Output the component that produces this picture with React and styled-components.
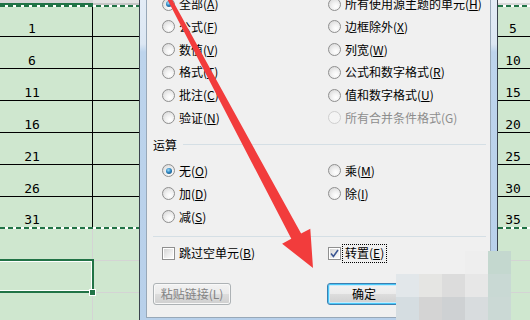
import React from 'react';
import styled, { createGlobalStyle, css } from 'styled-components';

const Global = createGlobalStyle`
  html, body { margin: 0; padding: 0; background: #fff; }
  body { width: 530px; height: 320px; overflow: hidden; }
`;

const mono = `"DejaVu Sans Mono", "Liberation Mono", monospace`;
const ui = `"Noto Sans CJK SC", "Noto Sans", sans-serif`;

const Page = styled.div`
  position: relative;
  width: 530px;
  height: 320px;
  overflow: hidden;
  display: flex;
  background: #cfe7cf;
`;

/* ---------- spreadsheet ---------- */
const Sheet = styled.div`
  flex: none;
  width: ${p => p.$width}px;
  display: flex;
  flex-direction: column;
  background: #cfe7cf;
`;

const HeaderRow = styled.div`
  display: flex;
  height: 5px;
  flex: none;
`;

const HeaderCell = styled.div`
  box-sizing: border-box;
  width: ${p => p.$w}px;
  flex: none;
  background: ${p => p.$bg};
  border-bottom: 2px solid ${p => p.$line};
`;

const DashLine = styled.div`
  height: 2px;
  flex: none;
  background: repeating-linear-gradient(90deg, #217346 0 5px, #ffffff 5px 8px);
`;

const Row = styled.div`
  display: flex;
  flex: none;
  box-sizing: border-box;
  height: ${p => p.$h}px;
  border-bottom: ${p => (p.$line ? `1px solid ${p.$line}` : 'none')};
`;

const Cell = styled.div`
  position: relative;
  box-sizing: border-box;
  width: ${p => p.$w}px;
  flex: none;
  border-right: ${p => (p.$rline ? `1px solid ${p.$rline}` : 'none')};
  padding-right: ${p => p.$pr || 0}px;
  display: flex;
  align-items: flex-end;
  justify-content: center;
  font: 13px/14px ${mono};
  color: #000;
  ${p =>
    p.$selected &&
    css`
      &::after {
        content: '';
        position: absolute;
        left: -3px;
        top: -2px;
        right: -2px;
        bottom: -1px;
        border: 2px solid #217346;
        box-shadow: inset 0 0 0 1px #fff;
      }
      &::before {
        content: '';
        position: absolute;
        right: -4px;
        bottom: -4px;
        width: 5px;
        height: 5px;
        background: #217346;
        border: 1px solid #fff;
        z-index: 1;
      }
    `}
`;

/* ---------- dialog window ---------- */
const Frame = styled.div`
  flex: none;
  width: 359px;
  box-sizing: border-box;
  border-left: 1px solid #3a434d;
  border-right: 1px solid #3a434d;
  padding: 0 6px 2px;
  background: linear-gradient(
    to bottom,
    #e3ecf6 0,
    #dce7f3 44px,
    #bdd4ec 52px,
    #b8d0ea 100%
  );
  display: flex;
`;

const Dialog = styled.div`
  flex: 1;
  box-sizing: border-box;
  border: 1px solid #98a8b8;
  border-top: none;
  background: #f0f0f0;
  display: flex;
  flex-direction: column;
  overflow: hidden;
  font-family: ${ui};
  font-size: 12px;
  color: #000;
`;

const OptionGrid = styled.div`
  display: grid;
  grid-template-columns: 166px 1fr;
  grid-auto-rows: 22.8px;
  padding-left: 15px;
  margin-top: ${p => p.$mt}px;
  flex: none;
`;

const Option = styled.label`
  display: flex;
  align-items: center;
  gap: 4px;
  white-space: nowrap;
`;

const Radio = styled.span`
  position: relative;
  flex: none;
  width: 13px;
  height: 13px;
  box-sizing: border-box;
  border-radius: 50%;
  border: 1px solid ${p => (p.$disabled ? '#cfcfcf' : '#8f8f8f')};
  background: ${p =>
    p.$disabled
      ? '#f4f4f4'
      : 'radial-gradient(circle at 62% 68%, #ffffff 0, #f3f3f3 35%, #d2d2d2 100%)'};
  ${p =>
    p.$checked &&
    css`
      &::after {
        content: '';
        position: absolute;
        left: 2.5px;
        top: 2.5px;
        width: 6px;
        height: 6px;
        border-radius: 50%;
        background: radial-gradient(circle at 40% 35%, #9fdcfa 0, #2e86c1 45%, #0f3f66 100%);
      }
    `}
`;

const CheckBox = styled.span`
  flex: none;
  width: 13px;
  height: 13px;
  box-sizing: border-box;
  border: 1px solid #8f8f8f;
  padding: 1px;
  background: #fff;
  display: flex;
  & > span {
    flex: 1;
    display: flex;
    align-items: center;
    justify-content: center;
    background: linear-gradient(135deg, #d5d5d5 0, #ececec 55%, #fbfbfb 100%);
  }
`;

const Label = styled.span`
  font-size: 12px;
  line-height: 16px;
  white-space: nowrap;
  color: ${p => (p.$disabled ? '#8d8d8d' : '#000')};
  ${p =>
    p.$focus &&
    css`
      outline: 1px dotted #000;
      padding: 0 2px 1px;
      margin-left: -2px;
    `}
  u {
    text-decoration-thickness: 1px;
    text-underline-offset: 1px;
  }
`;

const SectionHead = styled.div`
  display: flex;
  align-items: center;
  gap: 6px;
  height: 16px;
  margin: 7.6px 4px 0 6px;
  flex: none;
`;

const Rule = styled.div`
  flex: 1;
  height: 1px;
  background: #d5dfe5;
`;

const Separator = styled.div`
  height: 1px;
  flex: none;
  margin: 8px 4px 0 6px;
  background: #d5dfe5;
`;

const CheckRow = styled.div`
  display: grid;
  grid-template-columns: 166px 1fr;
  height: 22px;
  align-items: center;
  padding-left: 15px;
  margin-top: 5.5px;
  flex: none;
`;

const ButtonRow = styled.div`
  display: flex;
  gap: 96px;
  padding-left: 6px;
  margin-top: 18.5px;
  flex: none;
`;

const Button = styled.div`
  box-sizing: border-box;
  width: ${p => p.$w}px;
  height: 22px;
  border-radius: 3px;
  display: flex;
  align-items: center;
  justify-content: center;
  font-size: 12px;
  white-space: nowrap;
  color: ${p => (p.$disabled ? '#838383' : '#000')};
  border: 1px solid ${p => (p.$default ? '#3c7fb1' : '#adb2b5')};
  background: linear-gradient(to bottom, #f2f2f2 0, #ebebeb 50%, #dddddd 51%, #cfcfcf 100%);
  box-shadow: ${p =>
    p.$default ? 'inset 0 0 0 1px #48c8f8, inset 0 0 0 2px #c6eafc' : 'inset 0 0 0 1px #f8f8f8'};
`;

/* ---------- overlays ---------- */
const Mosaic = styled.div`
  position: absolute;
  left: 396px;
  top: 251px;
  display: grid;
  grid-template-columns: repeat(6, 23px);
  grid-auto-rows: 23px;
  pointer-events: none;
`;

const Tile = styled.div`
  background: ${p => p.$c || 'transparent'};
`;

const ArrowLayer = styled.svg`
  position: absolute;
  left: 0;
  top: 0;
  pointer-events: none;
`;

/* ---------- data ---------- */
const pasteOptions = [
  { t: '全部', k: 'A', checked: true },
  { t: '所有使用源主题的单元', k: 'H' },
  { t: '公式', k: 'F' },
  { t: '边框除外', k: 'X' },
  { t: '数值', k: 'V' },
  { t: '列宽', k: 'W' },
  { t: '格式', k: 'T' },
  { t: '公式和数字格式', k: 'R' },
  { t: '批注', k: 'C' },
  { t: '值和数字格式', k: 'U' },
  { t: '验证', k: 'N' },
  { t: '所有合并条件格式', k: 'G', disabled: true },
];

const opOptions = [
  { t: '无', k: 'O', checked: true },
  { t: '乘', k: 'M' },
  { t: '加', k: 'D' },
  { t: '除', k: 'I' },
  { t: '减', k: 'S' },
];

const leftNums = [1, 6, 11, 16, 21, 26, 31];
const rightNums = [5, 10, 15, 20, 25, 30, 35];
const rowHeights = [30, 32, 32, 32, 32, 32, 30];

const mosaic = [
  [null, null, null, '#eeeeee', '#c4d8cf', null],
  ['#e2e7ea', '#e5e5e3', '#dcdcdc', '#e7e7e7', '#c9d9d4', null],
  ['#d5dde1', '#d4d4d4', '#ced1d3', '#d8dcde', '#cbd9d5', null],
];

function Text({ t, k, disabled, focus }) {
  return (
    <Label $disabled={disabled} $focus={focus}>
      {t}(
      {disabled ? k : <u>{k}</u>})
    </Label>
  );
}

function RadioOption({ t, k, checked, disabled }) {
  return (
    <Option>
      <Radio $checked={checked} $disabled={disabled} />
      <Text t={t} k={k} disabled={disabled} />
    </Option>
  );
}

function Check({ checked }) {
  return (
    <CheckBox>
      <span>
        {checked && (
          <svg width="9" height="9" viewBox="0 0 9 9">
            <path d="M1 4.6 L3.4 7.4 L8 1" fill="none" stroke="#3a5592" strokeWidth="1.6" />
          </svg>
        )}
      </span>
    </CheckBox>
  );
}

function LeftSheet() {
  return (
    <Sheet $width={139}>
      <HeaderRow>
        <HeaderCell $w={93} $bg="#d6d6d6" $line="#217346" />
        <HeaderCell $w={46} $bg="#e4e4e4" $line="#c6c6c6" />
      </HeaderRow>
      <DashLine />
      {leftNums.map((n, i) => (
        <Row key={n} $h={rowHeights[i]} $line={i < 6 ? '#000' : null}>
          <Cell $w={93} $pr={28} $rline="#000">{n}</Cell>
          <Cell $w={46} />
        </Row>
      ))}
      <DashLine />
      <Row $h={32} $line="#d4d4d4">
        <Cell $w={93} $rline="#d4d4d4" />
        <Cell $w={46} />
      </Row>
      <Row $h={32} $line="#d4d4d4">
        <Cell $w={93} $rline="#d4d4d4" $selected />
        <Cell $w={46} />
      </Row>
      <Row $h={30}>
        <Cell $w={93} $rline="#d4d4d4" />
        <Cell $w={46} />
      </Row>
    </Sheet>
  );
}

function RightSheet() {
  return (
    <Sheet $width={32}>
      <HeaderRow>
        <HeaderCell $w={32} $bg="#f2f2f2" $line="#d9d9d9" />
      </HeaderRow>
      <DashLine />
      {rightNums.map((n, i) => (
        <Row key={n} $h={rowHeights[i]} $line={i < 6 ? '#000' : null}>
          <Cell $w={32} $pr={2}>{n}</Cell>
        </Row>
      ))}
      <DashLine />
      <Row $h={32} $line="#d4d4d4" />
      <Row $h={32} $line="#d4d4d4" />
    </Sheet>
  );
}

function PasteDialog() {
  return (
    <Frame>
      <Dialog>
        <OptionGrid $mt={-7.4}>
          {pasteOptions.map(o => (
            <RadioOption key={o.k} {...o} />
          ))}
        </OptionGrid>
        <SectionHead>
          <Label>运算</Label>
          <Rule />
        </SectionHead>
        <OptionGrid $mt={6.6}>
          {opOptions.map(o => (
            <RadioOption key={o.k} {...o} />
          ))}
        </OptionGrid>
        <Separator />
        <CheckRow>
          <Option>
            <Check />
            <Text t="跳过空单元" k="B" />
          </Option>
          <Option>
            <Check checked />
            <Text t="转置" k="E" focus />
          </Option>
        </CheckRow>
        <ButtonRow>
          <Button $w={78} $disabled>
            粘贴链接(L)
          </Button>
          <Button $w={74} $default>
            确定
          </Button>
        </ButtonRow>
      </Dialog>
    </Frame>
  );
}

export default function App() {
  return (
    <>
      <Global />
      <Page>
        <LeftSheet />
        <PasteDialog />
        <RightSheet />
        <Mosaic>
          {mosaic.flat().map((c, i) => (
            <Tile key={i} $c={c} />
          ))}
        </Mosaic>
        <ArrowLayer width="530" height="320" viewBox="0 0 530 320">
          <polygon
            points="169.1,-5.9 301.1,233.6 310.3,228.7 313,268 282.1,243.7 291.3,238.8 165.5,-4.1"
            fill="#f23c3c"
          />
        </ArrowLayer>
      </Page>
    </>
  );
}
